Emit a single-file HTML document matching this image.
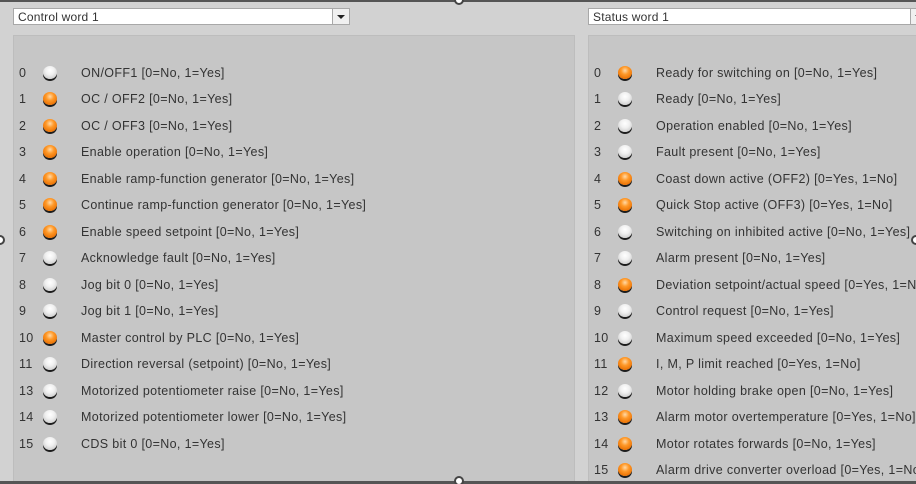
<!DOCTYPE html>
<html style="overflow:hidden;height:484px"><head><style>
body{margin:0;width:916px;height:484px;overflow:hidden;background:#d2d2d2;font-family:"Liberation Sans",sans-serif;font-size:12.5px;letter-spacing:0.35px;color:#333;position:relative}
.p{position:absolute;background:#c6c6c6;border:1px solid #bdbdbd;border-bottom:0}
.dd{position:absolute;height:17px;background:#fff;border:1px solid #a8a8a8;line-height:17px;padding-left:4px;box-sizing:border-box;color:#333;font-size:12px;letter-spacing:0.2px}
.btn{position:absolute;right:0;top:0;width:16px;height:15px;border-left:1px solid #a8a8a8;background:#f0f0f0}
.btn:after{content:"";position:absolute;left:4px;top:6px;border-left:4px solid transparent;border-right:4px solid transparent;border-top:4px solid #222}
.r{position:absolute;height:16px;line-height:16px;white-space:nowrap}
.n{position:absolute;left:0}
.l{position:absolute;top:1px;width:14px;height:13px;border-radius:50%;box-shadow:0 2px 0 #1c1c1c}
.o{background:radial-gradient(circle at 50% 35%,#ffd9a8 0,#ff9a2a 35%,#e86e00 80%)}
.w{background:radial-gradient(circle at 50% 35%,#fff 0,#f0f0f0 40%,#c8c8c8 85%)}
.t{position:absolute}
.h{position:absolute;width:10px;height:10px;border-radius:50%;background:#fff;border:2px solid #444;box-sizing:border-box}
</style></head><body>
<div style="position:absolute;left:0;top:0;width:916px;height:2px;background:#555"></div>
<div class="dd" style="left:13px;top:8px;width:337px">Control word 1<div class="btn"></div></div>
<div class="dd" style="left:588px;top:8px;width:340px">Status word 1<div class="btn"></div></div>
<div class="p" style="left:13px;top:35px;width:560px;height:449px"></div>
<div class="p" style="left:588px;top:35px;width:340px;height:449px"></div>
<div id="L"></div><div id="R"></div>
<script>
var L=[["0","ON/OFF1 [0=No, 1=Yes]",0],["1","OC / OFF2 [0=No, 1=Yes]",1],["2","OC / OFF3 [0=No, 1=Yes]",1],["3","Enable operation [0=No, 1=Yes]",1],["4","Enable ramp-function generator [0=No, 1=Yes]",1],["5","Continue ramp-function generator [0=No, 1=Yes]",1],["6","Enable speed setpoint [0=No, 1=Yes]",1],["7","Acknowledge fault [0=No, 1=Yes]",0],["8","Jog bit 0 [0=No, 1=Yes]",0],["9","Jog bit 1 [0=No, 1=Yes]",0],["10","Master control by PLC [0=No, 1=Yes]",1],["11","Direction reversal (setpoint) [0=No, 1=Yes]",0],["13","Motorized potentiometer raise [0=No, 1=Yes]",0],["14","Motorized potentiometer lower [0=No, 1=Yes]",0],["15","CDS bit 0 [0=No, 1=Yes]",0]];
var R=[["0","Ready for switching on [0=No, 1=Yes]",1],["1","Ready [0=No, 1=Yes]",0],["2","Operation enabled [0=No, 1=Yes]",0],["3","Fault present [0=No, 1=Yes]",0],["4","Coast down active (OFF2) [0=Yes, 1=No]",1],["5","Quick Stop active (OFF3) [0=Yes, 1=No]",1],["6","Switching on inhibited active [0=No, 1=Yes]",0],["7","Alarm present [0=No, 1=Yes]",0],["8","Deviation setpoint/actual speed [0=Yes, 1=No]",1],["9","Control request [0=No, 1=Yes]",0],["10","Maximum speed exceeded [0=No, 1=Yes]",0],["11","I, M, P limit reached [0=Yes, 1=No]",1],["12","Motor holding brake open [0=No, 1=Yes]",0],["13","Alarm motor overtemperature [0=Yes, 1=No]",1],["14","Motor rotates forwards [0=No, 1=Yes]",1],["15","Alarm drive converter overload [0=Yes, 1=No]",1]];
function b(a,x,ledx,tx,id){var h="";a.forEach(function(r,i){var y=64.5+i*26.5;h+='<div class="r" style="left:'+x+'px;top:'+y+'px"><span class="n">'+r[0]+'</span><span class="l '+(r[2]?'o':'w')+'" style="left:'+ledx+'px"></span><span class="t" style="left:'+tx+'px">'+r[1]+'</span></div>';});document.getElementById(id).innerHTML=h;}
b(L,19,24,62,"L");b(R,594,24,62,"R");
</script>
<div style="position:absolute;left:0;top:481px;width:916px;height:3px;background:#555"></div>
<div class="h" style="left:454px;top:-5px"></div>
<div class="h" style="left:454px;top:476px"></div>
<div class="h" style="left:-5px;top:235px"></div>
<div class="h" style="left:911px;top:235px"></div>
</body></html>
